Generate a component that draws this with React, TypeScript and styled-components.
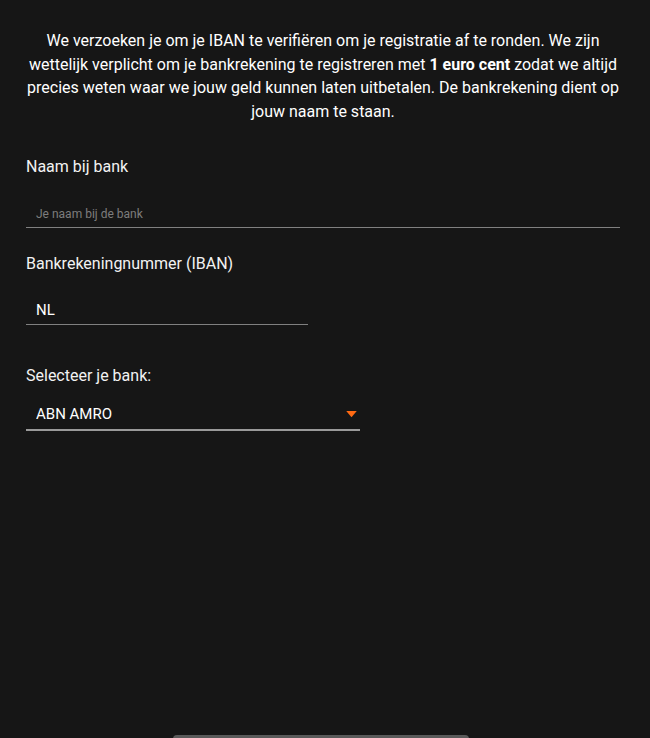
import React from "react";
import styled, { createGlobalStyle } from "styled-components";

const GlobalStyle = createGlobalStyle`
  html, body {
    margin: 0;
    padding: 0;
    background-color: #161616;
  }
  body {
    font-family: Roboto, "Liberation Sans", sans-serif;
    color: #fff;
  }
`;

const App = () => {
  return (
    <Container>
      <GlobalStyle />
      <Intro>
        We verzoeken je om je IBAN te verifiëren om je registratie af te ronden.
        We zijn wettelijk verplicht om je bankrekening te registreren met{" "}
        <strong>1 euro cent</strong> zodat we altijd precies weten waar we jouw
        geld kunnen laten uitbetalen. De bankrekening dient op jouw naam te
        staan.
      </Intro>

      <Field $gap={34}>
        <Label>Naam bij bank</Label>
        <Input placeholder="Je naam bij de bank" $width="100%" />
      </Field>

      <Field $gap={26}>
        <Label>Bankrekeningnummer (IBAN)</Label>
        <Input defaultValue="NL" $width="282px" />
      </Field>

      <Field $gap={41}>
        <Label>Selecteer je bank:</Label>
        <SelectWrap>
          <Select defaultValue="abn">
            <option value="abn">ABN AMRO</option>
            <option value="asn">ASN Bank</option>
            <option value="ing">ING</option>
            <option value="rabo">Rabobank</option>
            <option value="sns">SNS Bank</option>
          </Select>
          <Caret viewBox="0 0 12 8">
            <path d="M0 0 L12 0 L6 7 Z" fill="#ff6a13" />
          </Caret>
        </SelectWrap>
      </Field>

      <Footer>
        <NextButton>Volgende</NextButton>
      </Footer>
    </Container>
  );
};

export default App;

const Container = styled.div`
  padding: 29px 30px 0 26px;
  display: flex;
  flex-direction: column;
`;

const Intro = styled.p`
  margin: 0;
  font-size: 16px;
  line-height: 23.5px;
  text-align: center;
  strong {
    font-weight: 700;
  }
`;

const Field = styled.div<{ $gap: number }>`
  display: flex;
  flex-direction: column;
  margin-top: ${(p) => p.$gap}px;
`;

const Label = styled.label`
  font-size: 16px;
  line-height: 20px;
  color: #f2f2f2;
  margin-bottom: 20px;
`;

const Input = styled.input<{ $width: string }>`
  box-sizing: border-box;
  width: ${(p) => p.$width};
  height: 31px;
  padding: 6px 10px 4px;
  background: transparent;
  border: none;
  border-bottom: 1px solid #808080;
  outline: none;
  color: #fff;
  font-family: Roboto, "Liberation Sans", sans-serif;
  font-size: 15px;
  line-height: 20px;
  &::placeholder {
    color: #7d7d7d;
    font-size: 12px;
  }
`;

const SelectWrap = styled.div`
  position: relative;
  width: 334px;
  margin-top: -8px;
`;

const Select = styled.select`
  box-sizing: border-box;
  width: 100%;
  height: 33px;
  padding: 6px 10px 5px;
  appearance: none;
  background: transparent;
  border: none;
  border-bottom: 2px solid #9a9a9a;
  border-radius: 0;
  outline: none;
  color: #fff;
  font-family: Roboto, "Liberation Sans", sans-serif;
  font-size: 15px;
  line-height: 20px;
  option {
    background: #161616;
  }
`;

const Caret = styled.svg`
  position: absolute;
  right: 3px;
  top: 13px;
  width: 11px;
  height: 7px;
  pointer-events: none;
`;

const Footer = styled.div`
  display: flex;
  justify-content: center;
  margin-top: 304px;
`;

const NextButton = styled.button`
  box-sizing: border-box;
  width: 296px;
  height: 48px;
  margin-left: -4px;
  padding-top: 22px;
  border: none;
  border-radius: 4px;
  background-color: #5a5a5a;
  color: #cfcfcf;
  font-family: Roboto, "Liberation Sans", sans-serif;
  font-size: 16px;
`;
